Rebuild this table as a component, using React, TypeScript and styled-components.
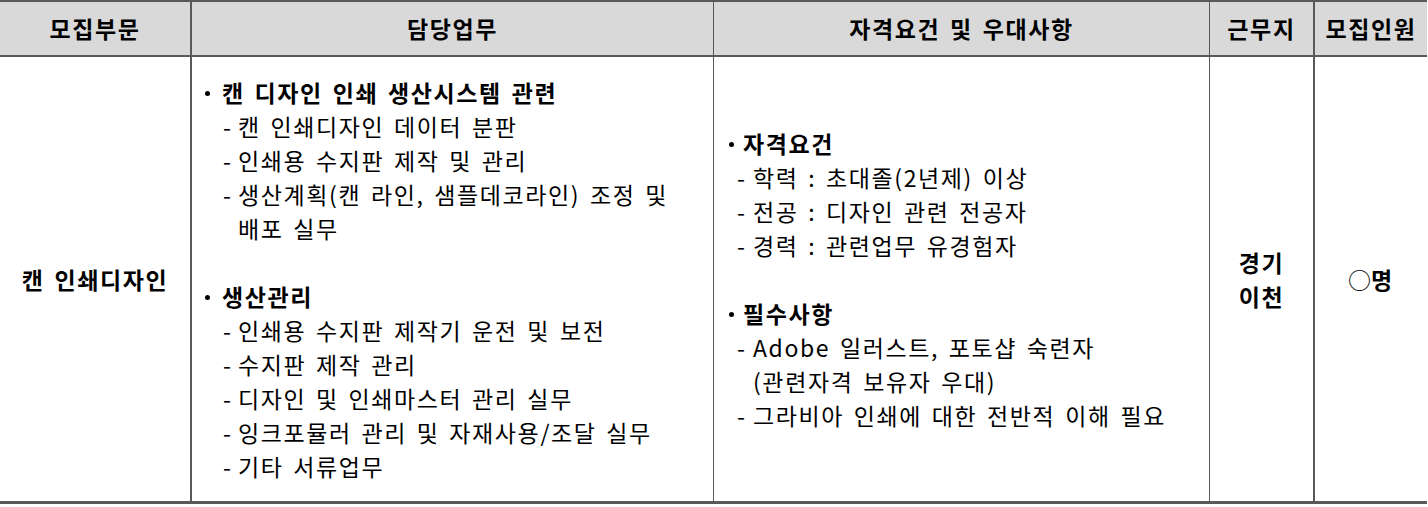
import React from "react";
import styled, { createGlobalStyle } from "styled-components";

// ------------------------------------ DATA ------------------------------------
interface Block {
  title: string;
  items: string[][]; // each item: first line + continuation lines
}

const duties: Block[] = [
  {
    title: "캔 디자인 인쇄 생산시스템 관련",
    items: [
      ["캔 인쇄디자인 데이터 분판"],
      ["인쇄용 수지판 제작 및 관리"],
      ["생산계획(캔 라인, 샘플데코라인) 조정 및", "배포 실무"]
    ]
  },
  {
    title: "생산관리",
    items: [
      ["인쇄용 수지판 제작기 운전 및 보전"],
      ["수지판 제작 관리"],
      ["디자인 및 인쇄마스터 관리 실무"],
      ["잉크포뮬러 관리 및 자재사용/조달 실무"],
      ["기타 서류업무"]
    ]
  }
];

const requirements: Block[] = [
  {
    title: "자격요건",
    items: [
      ["학력 : 초대졸(2년제) 이상"],
      ["전공 : 디자인 관련 전공자"],
      ["경력 : 관련업무 유경험자"]
    ]
  },
  {
    title: "필수사항",
    items: [
      ["Adobe 일러스트, 포토샵 숙련자", "(관련자격 보유자 우대)"],
      ["그라비아 인쇄에 대한 전반적 이해 필요"]
    ]
  }
];

interface Indent {
  head: number;
  bullet: number;
  sub: number;
  dash: number;
}

const dutyIndent: Indent = { head: 13, bullet: 17, sub: 31, dash: 15 };
const reqIndent: Indent = { head: 15, bullet: 14, sub: 23, dash: 16 };

// ---------------------------------- COMPONENTS ----------------------------------
const BlockList = ({ blocks, indent }: { blocks: Block[]; indent: Indent }) => (
  <>
    {blocks.map((block, i) => (
      <React.Fragment key={i}>
        {i > 0 && <Line />}
        <HeadLine $pad={indent.head}>
          <Bullet $w={indent.bullet} />
          {block.title}
        </HeadLine>
        {block.items.map((lines, j) =>
          lines.map((text, k) =>
            k === 0 ? (
              <Line key={`${j}-${k}`} $pad={indent.sub}>
                <Dash $w={indent.dash}>-</Dash>
                {text}
              </Line>
            ) : (
              <Line key={`${j}-${k}`} $pad={indent.sub + indent.dash}>
                {text}
              </Line>
            )
          )
        )}
      </React.Fragment>
    ))}
  </>
);

export default function App() {
  return (
    <>
      <GlobalStyle />
      <Table>
        <HeadCell $thick>모집부문</HeadCell>
        <HeadCell>담당업무</HeadCell>
        <HeadCell>자격요건 및 우대사항</HeadCell>
        <HeadCell $thick>근무지</HeadCell>
        <HeadCell $last>모집인원</HeadCell>

        <BodyCell $thick $center>
          <Strong>캔 인쇄디자인</Strong>
        </BodyCell>
        <BodyCell>
          <BlockList blocks={duties} indent={dutyIndent} />
        </BodyCell>
        <BodyCell>
          <BlockList blocks={requirements} indent={reqIndent} />
        </BodyCell>
        <BodyCell $thick $center>
          <Strong>경기</Strong>
          <Strong>이천</Strong>
        </BodyCell>
        <BodyCell $last $center>
          <Strong>
            <Circle>○</Circle>명
          </Strong>
        </BodyCell>
      </Table>
    </>
  );
}

// ------------------------------------ STYLES ------------------------------------
const GlobalStyle = createGlobalStyle`
  html, body {
    margin: 0;
    padding: 0;
    background: #ffffff;
  }
  body {
    font-family: "Noto Sans CJK KR", "Noto Sans", sans-serif;
    color: #000000;
  }
`;

const Table = styled.div`
  width: 1427px;
  display: grid;
  grid-template-columns: 192px 522px 496px 105px 112px;
  grid-template-rows: 55px 444px;
  border-top: 2px solid #595959;
  border-bottom: 3px solid #595959;
  font-size: 23px;
  letter-spacing: 1.6px;
  word-spacing: 3px;
`;

const HeadCell = styled.div<{ $thick?: boolean; $last?: boolean }>`
  display: flex;
  align-items: center;
  justify-content: center;
  background: #d9d9d9;
  border-bottom: 2px solid #595959;
  border-right: ${p => (p.$last ? "none" : p.$thick ? "2px" : "1px")} solid #595959;
  font-weight: 700;
  line-height: 1;
`;

const BodyCell = styled.div<{ $thick?: boolean; $last?: boolean; $center?: boolean }>`
  display: flex;
  flex-direction: column;
  justify-content: center;
  align-items: ${p => (p.$center ? "center" : "stretch")};
  border-right: ${p => (p.$last ? "none" : p.$thick ? "2px" : "1px")} solid #595959;
  line-height: 34px;
`;

const Strong = styled.div`
  font-weight: 700;
  height: 34px;
  white-space: nowrap;
`;

const Circle = styled.span`
  font-weight: 400;
  letter-spacing: 0;
`;

const Line = styled.div<{ $pad?: number }>`
  display: flex;
  height: 34px;
  padding-left: ${p => p.$pad || 0}px;
  white-space: nowrap;
`;

const HeadLine = styled(Line)`
  font-weight: 700;
`;

const Bullet = styled.span<{ $w: number }>`
  width: ${p => p.$w}px;
  flex: none;
  display: flex;
  align-items: center;
  padding-top: 2px;

  &::before {
    content: "";
    width: 5px;
    height: 5px;
    border-radius: 50%;
    background: #000000;
  }
`;

const Dash = styled.span<{ $w: number }>`
  width: ${p => p.$w}px;
  flex: none;
`;
